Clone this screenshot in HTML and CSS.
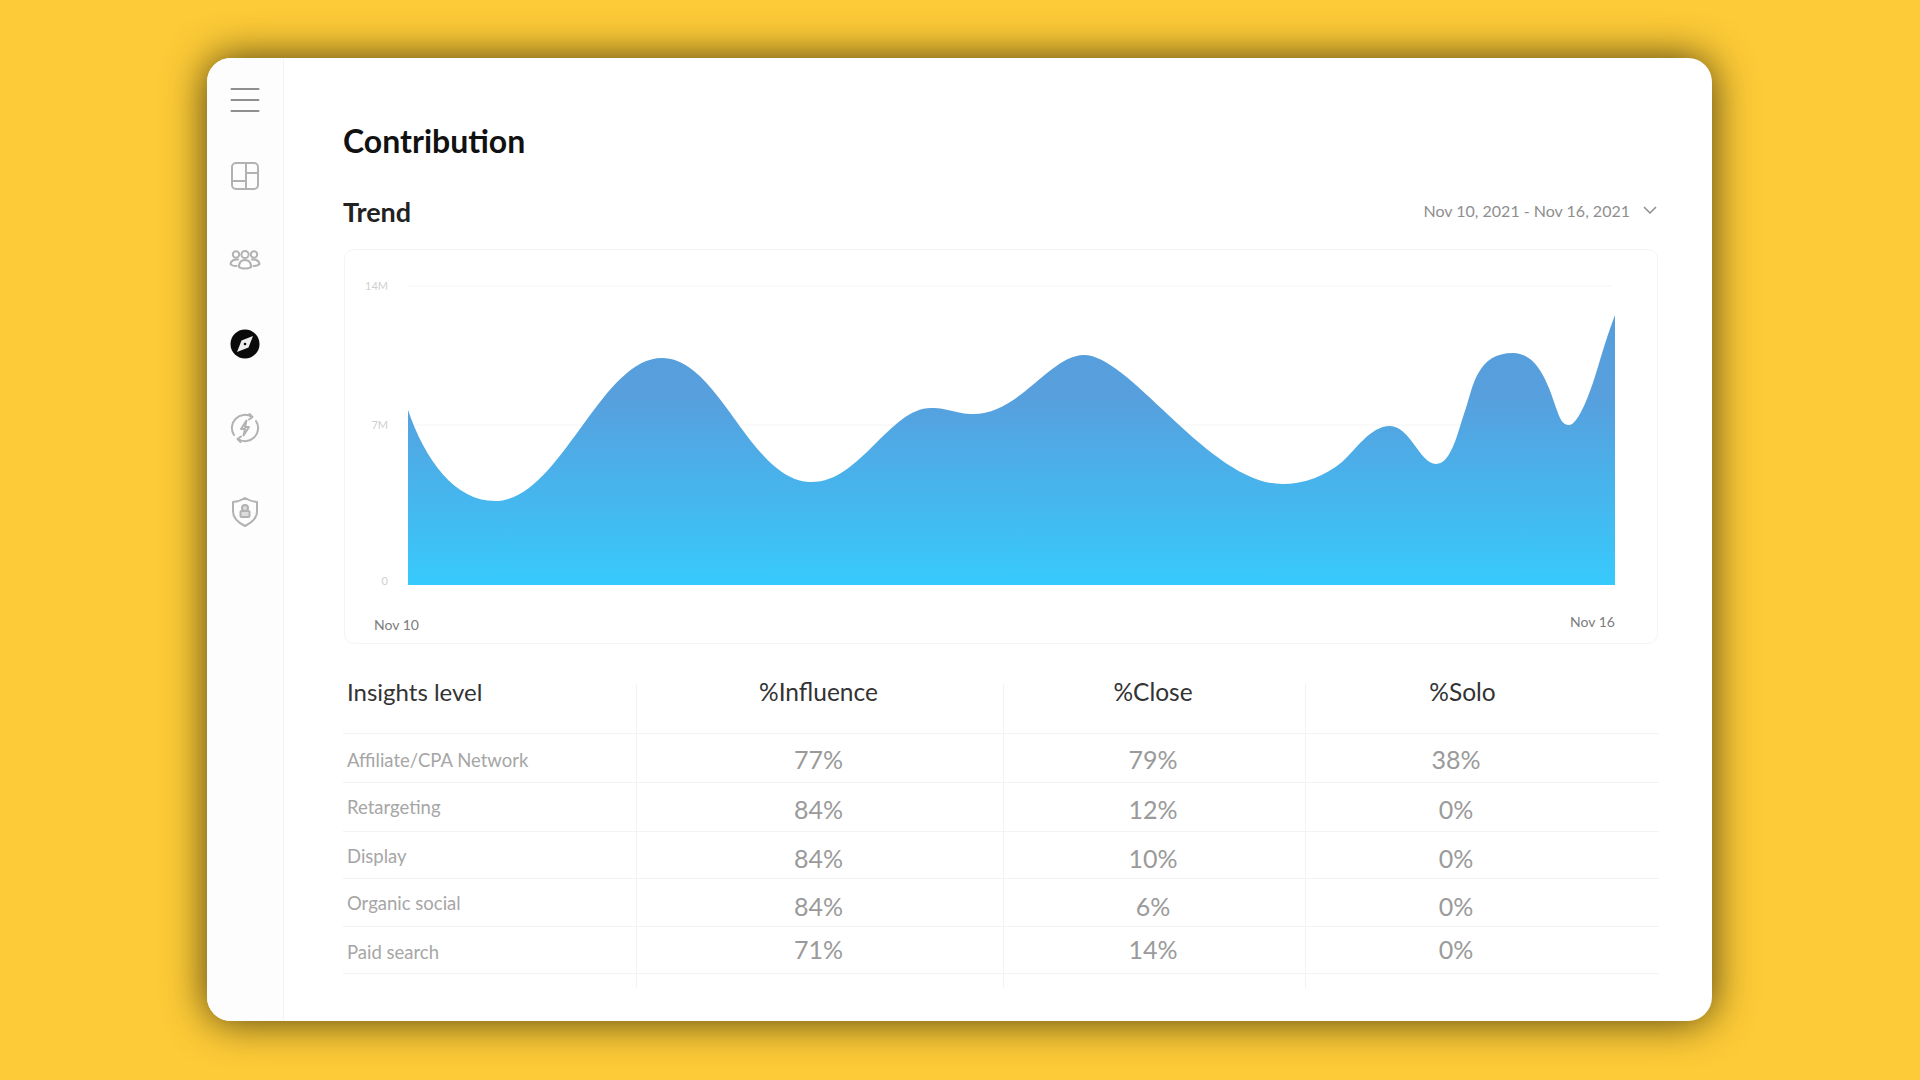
FILE: index.html
```html
<!DOCTYPE html>
<html lang="en">
<head>
<meta charset="utf-8">
<title>Contribution</title>
<link rel="stylesheet" href="styles.css">
</head>
<body>
<div class="card">
  <nav class="sidebar">
    <svg class="icon menu" viewBox="0 0 32 32"><path class="stroke dark" d="M2.500 5h27M2.500 16h27M2.500 27h27"/></svg>
    <svg class="icon" viewBox="0 0 32 32"><rect class="stroke" x="3" y="3" width="26" height="26" rx="4"/><path class="stroke" d="M17 3v26M3 21h14M17 13h12"/></svg>
    <svg class="icon" viewBox="0 0 32 32"><g class="stroke"><circle cx="16" cy="10.500" r="3.600"/><circle cx="7" cy="10.500" r="3.200"/><circle cx="25" cy="10.500" r="3.200"/><path d="M10 23c0-4.500 2.500-7 6-7s6 2.500 6 7c-2 2-10 2-12 0z"/><path d="M9 15.500c-3.500-.5-7 1-7.500 4.500 1 1.500 3.500 2 6 2"/><path d="M23 15.500c3.500-.5 7 1 7.500 4.500-1 1.500-3.500 2-6 2"/></g></svg>
    <svg class="icon" viewBox="0 0 32 32"><circle class="solid" cx="16" cy="16" r="14.500"/><path class="knock" d="M24 8 19.500 19.500 8 24 12.500 12.500z"/><circle class="solid" cx="16" cy="16" r="1.300"/></svg>
    <svg class="icon" viewBox="0 0 32 32"><g class="stroke"><path d="M23 5A13 13 0 0 0 5 23M9 27A13 13 0 0 0 27 9"/><path d="M20.500 2 23.500 5 20 7.500M11.500 30 8.500 27 12 24.500"/><path d="M17.500 8.500 12 17h4l-1.500 6.500L20 15h-4z"/></g></svg>
    <svg class="icon" viewBox="0 0 32 32"><g class="stroke"><path d="M16 2c3.500 2.300 7.500 3.600 12 4v9.500c0 6.500-5 11-12 14.500-7-3.500-12-8-12-14.500V6c4.500-.4 8.500-1.700 12-4z"/><circle class="tint" cx="16" cy="12" r="3"/><rect class="tint" x="11.500" y="15" width="9" height="6" rx="1"/></g></svg>
  </nav>
  <main class="main">
    <h1 class="title">Contribution</h1>
    <div class="trend-head">
      <h2 class="subtitle">Trend</h2>
      <div class="date">
        <span>Nov 10, 2021 - Nov 16, 2021</span>
        <svg class="chevron" viewBox="0 0 14 8"><path d="M1 1l6 6 6-6"/></svg>
      </div>
    </div>
    <section class="chart">
      <svg class="chart-svg" viewBox="345 250 1312 393">
        <defs>
          <linearGradient id="fill" x1="0" y1="0" x2="0" y2="1">
            <stop offset="0" stop-color="#559edb"/>
            <stop offset=".3" stop-color="#579fdd"/>
            <stop offset="1" stop-color="#37cafc"/>
          </linearGradient>
        </defs>
        <path class="grid-line" d="M408 286H1612M408 425H1612"/>
        <path fill="url(#fill)" d="M408 410C425 460 455 501 495 501C560 501 600 358 662 358C720 358 750 482 812 482C860 482 890 408 931 408C950 408 955 414 973 414C1020 414 1050 355 1084 355C1130 355 1210 484 1282 484C1305 484 1325 476 1342 462C1355 451 1370 426 1390 426C1410 426 1420 464 1436 464C1452 464 1458 430 1466 408C1473 385 1478 353 1513 353C1543 353 1552 400 1560 418C1563 424 1566 425 1569 425C1578 425 1590 395 1600 360C1605 343 1610 328 1615 315L1615 585L408 585Z"/>
        <text class="axis" x="388" y="290" text-anchor="end">14M</text>
        <text class="axis" x="388" y="429" text-anchor="end">7M</text>
        <text class="axis" x="388" y="585" text-anchor="end">0</text>
        <text class="date-tick" x="374" y="630">Nov 10</text>
        <text class="date-tick" x="1615" y="627" text-anchor="end">Nov 16</text>
      </svg>
    </section>
    <section class="table">
      <div class="row head">
        <div class="cell name">Insights level</div><div class="cell num">%Influence</div><div class="cell num">%Close</div><div class="cell num solo">%Solo</div>
      </div>
      <div class="row r1">
        <div class="cell name">Affiliate/CPA Network</div><div class="cell num">77%</div><div class="cell num">79%</div><div class="cell num val4">38%</div>
      </div>
      <div class="row r2">
        <div class="cell name">Retargeting</div><div class="cell num">84%</div><div class="cell num">12%</div><div class="cell num val4">0%</div>
      </div>
      <div class="row r3">
        <div class="cell name">Display</div><div class="cell num">84%</div><div class="cell num">10%</div><div class="cell num val4">0%</div>
      </div>
      <div class="row r4">
        <div class="cell name">Organic social</div><div class="cell num">84%</div><div class="cell num">6%</div><div class="cell num val4">0%</div>
      </div>
      <div class="row r5">
        <div class="cell name">Paid search</div><div class="cell num">71%</div><div class="cell num">14%</div><div class="cell num val4">0%</div>
      </div>
      <div class="row tail">
        <div class="cell"></div><div class="cell"></div><div class="cell"></div><div class="cell"></div>
      </div>
    </section>
  </main>
</div>
</body>
</html>
```

FILE: styles.css
```css
* { box-sizing: border-box; }

html, body { margin: 0; height: 100%; }

body {
  background: #fdcb37;
  padding: 58px 208px 59px 207px;
  font-family: Lato, "Noto Sans", sans-serif;
  overflow: hidden;
}

.card {
  display: flex;
  height: 963px;
  background: #fff;
  border-radius: 24px;
  box-shadow: 0 0 42px rgba(0, 0, 0, .7);
  overflow: hidden;
}

.sidebar {
  flex: 0 0 77px;
  display: flex;
  flex-direction: column;
  align-items: center;
  gap: 52px;
  padding-top: 26px;
  background: #fdfdfd;
  border-right: 1px solid #f4f4f4;
}

.icon { width: 32px; height: 32px; display: block; }
.menu { margin-bottom: -8px; }
.stroke { fill: none; stroke: #b2b2b2; stroke-width: 2; stroke-linecap: round; stroke-linejoin: round; }
.stroke.dark { stroke: #8f8f8f; }
.tint { fill: #dcdcdc; }
.solid { fill: #0a0a0a; }
.knock { fill: #ececec; }

.main {
  flex: 1;
  min-width: 0;
  padding: 0 53px 0 59px;
  display: flex;
  flex-direction: column;
}

.title {
  margin: 63px 0 0;
  height: 40px;
  line-height: 40px;
  font-size: 32px;
  font-weight: 700;
  color: #111;
}

.trend-head {
  display: flex;
  justify-content: space-between;
  align-items: center;
  margin-top: 34px;
  height: 32px;
}

.subtitle {
  margin: 0;
  font-size: 27px;
  font-weight: 700;
  color: #222;
}

.date {
  display: flex;
  align-items: center;
  gap: 13px;
  padding-right: 2px;
  padding-bottom: 2px;
  font-size: 16px;
  color: #8e8e8e;
}

.chevron { width: 14px; height: 8px; fill: none; stroke: #8e8e8e; stroke-width: 1.500; }

.chart {
  margin-top: 22px;
  margin-left: 1px;
  margin-right: 1px;
  height: 395px;
  border: 1px solid #f4f4f4;
  border-radius: 10px;
}

.chart-svg { display: block; width: 100%; height: 100%; overflow: visible; }
.grid-line { fill: none; stroke: #f5f5f5; stroke-width: 1; }
.axis { font-size: 11px; fill: #cfcfcf; }
.date-tick { font-size: 14px; fill: #7c7c7c; }

.table { margin-top: 40px; }

.row {
  display: grid;
  grid-template-columns: 293px 367px 302px 1fr;
  border-bottom: 1px solid #f3f3f3;
  height: 48px;
}

.cell {
  display: flex;
  align-items: center;
  justify-content: center;
  border-left: 1px solid #f3f3f3;
  font-size: 25px;
  color: #9a9a9a;
}

.cell:first-child { border-left: 0; }

.num { padding-right: 3px; }

.name {
  justify-content: flex-start;
  padding-left: 4px;
  font-size: 18.500px;
  color: #a6a6a6;
}

.val4 { padding-right: 53px; }

.head { height: 50px; }
.head .cell { font-size: 24.500px; line-height: 15px; color: #333; padding-bottom: 34px; }
.head .name { font-size: 24px; }
.head .solo { padding-right: 40px; }

.r1 { height: 49px; }
.r2 { height: 49px; }
.r3 { height: 47px; }
.r4 { height: 48px; }
.r5 { height: 47px; }

.r1 .num { padding-top: 1px; }
.r1 .name { padding-top: 3px; }
.r2 .num { padding-top: 4px; }
.r3 .num { padding-top: 6px; }
.r3 .name { padding-top: 1px; }
.r4 .num { padding-top: 6px; }
.r5 .num { padding-bottom: 2px; }
.r5 .name { padding-top: 3px; }

.tail { height: 14px; border-bottom: 0; }
```
